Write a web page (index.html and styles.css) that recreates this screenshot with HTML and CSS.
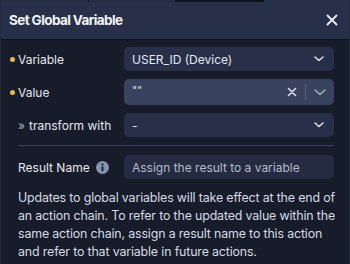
FILE: index.html
```html
<!DOCTYPE html>
<html>
<head>
<meta charset="utf-8">
<link rel="stylesheet" href="styles.css">
</head>
<body>
<div class="modal">
  <div class="topstrip"><span class="seg s1"></span><span class="seg s2"></span><span class="seg s3"></span></div>
  <div class="header">
    <span class="title">Set Global Variable</span>
    <svg class="close" width="12" height="12" viewBox="0 0 12 12"><path d="M1.5 1.5L10.5 10.5M10.5 1.5L1.5 10.5" stroke="#e8eaf0" stroke-width="1.8" stroke-linecap="round"/></svg>
  </div>
  <div class="body">
    <div class="row">
      <div class="label"><span class="dot"></span>Variable</div>
      <div class="field select">
        <span class="val">USER_ID (Device)</span>
        <svg class="chev" width="10" height="6" viewBox="0 0 10 6"><path d="M1 1l4 3.5L9 1" fill="none" stroke="#d8dce6" stroke-width="1.6" stroke-linecap="round" stroke-linejoin="round"/></svg>
      </div>
    </div>
    <div class="row">
      <div class="label"><span class="dot"></span>Value</div>
      <div class="field value">
        <span class="val quote">""</span>
        <div class="actions">
          <svg width="10" height="10" viewBox="0 0 10 10"><path d="M1.5 1.5l7 7M8.5 1.5l-7 7" stroke="#d8dce6" stroke-width="1.6" stroke-linecap="round"/></svg>
          <span class="vsep"></span>
          <svg width="12" height="7" viewBox="0 0 12 7"><path d="M1 1l5 4.5L11 1" fill="none" stroke="#aab1c4" stroke-width="1.4" stroke-linecap="round" stroke-linejoin="round"/></svg>
        </div>
      </div>
    </div>
    <div class="row">
      <div class="label sub"><span class="raquo">»</span> transform with</div>
      <div class="field select">
        <span class="val">-</span>
        <svg class="chev" width="10" height="6" viewBox="0 0 10 6"><path d="M1 1l4 3.5L9 1" fill="none" stroke="#d8dce6" stroke-width="1.6" stroke-linecap="round" stroke-linejoin="round"/></svg>
      </div>
    </div>
    <div class="divider"></div>
    <div class="row">
      <div class="label sub">Result Name
        <svg class="info" width="13" height="13" viewBox="0 0 13 13"><circle cx="6.5" cy="6.5" r="6.5" fill="#8a93ad"/><circle cx="6.5" cy="3.7" r="1.1" fill="#1a2030"/><rect x="5.5" y="5.6" width="2" height="4.6" rx="0.6" fill="#1a2030"/></svg>
      </div>
      <div class="field input"><span class="placeholder">Assign the result to a variable</span></div>
    </div>
    <p class="note">Updates to global variables will take effect at the end of an action chain. To refer to the updated value within the same action chain, assign a result name to this action and refer to that variable in future actions.</p>
  </div>
</div>
</body>
</html>
```
FILE: styles.css
```css
* { box-sizing: border-box; }
html, body { margin: 0; padding: 0; }
body {
  width: 350px;
  height: 264px;
  overflow: hidden;
  background: #171c2b;
  font-family: Inter, "Noto Sans", sans-serif;
  color: #e4e7ee;
}
.modal {
  width: 350px;
  height: 264px;
  background: #171c2b;
  border-left: 1px solid #232a3c;
  border-right: 1px solid #232a3c;
  position: relative;
}
.topstrip {
  position: absolute;
  top: 0; left: 0; right: 0;
  height: 2px;
  display: flex;
}
.seg { height: 2px; background: #141827; border-right: 1px solid #0c0f18; }
.s1 { width: 88px; background: #262d44; }
.s2 { width: 87px; background: #262d44; }
.s3 { width: 88px; background: #0f1320; }
.header {
  height: 40px;
  background: #283049;
  border-bottom: 1px solid #10141f;
  display: flex;
  align-items: center;
  justify-content: space-between;
  padding: 1px 11px 0 8px;
}
.title {
  font-size: 13.5px;
  font-weight: 700;
  color: #f2f4f8;
  letter-spacing: -0.6px;
}
.close { display: block; }
.body { padding: 7px 15px 0 9px; }
.row {
  display: flex;
  align-items: center;
  margin-bottom: 8px;
}
.label {
  width: 114px;
  flex: none;
  font-size: 12px;
  display: flex;
  align-items: center;
  color: #e4e7ee;
}
.label.sub { padding-left: 8px; }
.dot {
  width: 5px; height: 5px;
  border-radius: 50%;
  background: #f0b64c;
  margin: 0 3px 0 0;
}
.raquo { color: #aab1c4; margin-right: 4px; }
.info { margin-left: 6px; }
.field {
  flex: 1;
  height: 24px;
  background: #283049;
  border-radius: 5px;
  display: flex;
  align-items: center;
  justify-content: space-between;
  padding: 0 10px 0 8px;
  font-size: 12px;
}
.field.value {
  height: 26px;
  background: #39435f;
  align-items: flex-start;
  padding: 0 8px 0 8px;
}
.quote { padding-top: 4px; font-size: 11px; color: #d8dce6; }
.actions {
  display: flex;
  align-items: center;
  gap: 8px;
  height: 26px;
}
.actions svg { display: block; }
.vsep { width: 1px; height: 16px; background: #56607c; }
.chev { display: block; }
.field.input { background: #252c42; }
.placeholder { color: #b4bacb; }
.divider {
  height: 1px;
  background: #3a4258;
  margin: 0 0 9px 8px;
}
.note {
  margin: 0 -4px 0 0;
  padding: 2px 0 0 8px;
  font-size: 12.4px;
  line-height: 18px;
  letter-spacing: -0.15px;
  color: #d6dae3;
}
```
